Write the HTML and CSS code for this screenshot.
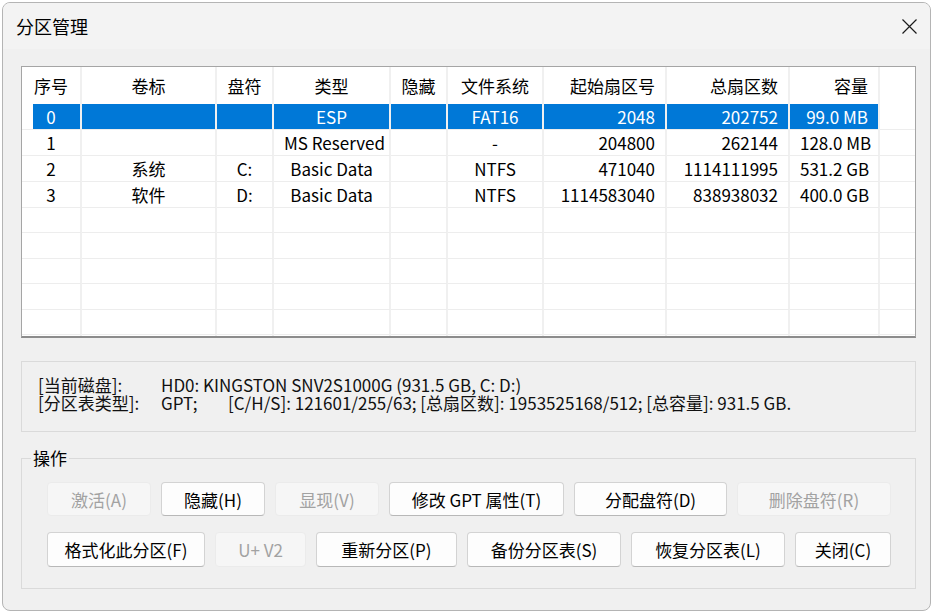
FILE: index.html
```html
<!DOCTYPE html>
<html lang="zh-CN">
<head>
    <meta charset="UTF-8">
    <title>分区管理</title>
    <link rel="stylesheet" href="styles.css">
</head>
<body>
    <div class="window">
        <div class="titlebar">
            <span class="title">分区管理</span>
            <span class="close">
                <svg width="15" height="15" viewBox="0 0 15 15"><path d="M0.5 0.5 L14.5 14.5 M14.5 0.5 L0.5 14.5" stroke="#1b1b1b" stroke-width="1.2" fill="none"/></svg>
            </span>
        </div>
        <div class="content">
            <div class="list">
                <table class="parts">
                    <colgroup>
                        <col style="width:60px"><col style="width:135px"><col style="width:57px"><col style="width:117px"><col style="width:57px">
                        <col style="width:96px"><col style="width:123px"><col style="width:123px"><col style="width:90px"><col style="width:35px">
                    </colgroup>
                    <thead>
                        <tr>
                            <th>序号</th><th>卷标</th><th>盘符</th><th>类型</th><th>隐藏</th>
                            <th>文件系统</th><th class="r">起始扇区号</th><th class="r">总扇区数</th><th class="r">容量</th><th class="fill"></th>
                        </tr>
                    </thead>
                    <tbody>
                        <tr class="sel">
                            <td>0</td><td></td><td></td><td>ESP</td><td></td>
                            <td>FAT16</td><td class="r">2048</td><td class="r">202752</td><td class="r">99.0 MB</td><td class="fill"></td>
                        </tr>
                        <tr>
                            <td>1</td><td></td><td></td><td>MS Reserved</td><td></td>
                            <td>-</td><td class="r">204800</td><td class="r">262144</td><td class="r">128.0 MB</td><td class="fill"></td>
                        </tr>
                        <tr>
                            <td>2</td><td>系统</td><td>C:</td><td>Basic Data</td><td></td>
                            <td>NTFS</td><td class="r">471040</td><td class="r">1114111995</td><td class="r">531.2 GB</td><td class="fill"></td>
                        </tr>
                        <tr>
                            <td>3</td><td>软件</td><td>D:</td><td>Basic Data</td><td></td>
                            <td>NTFS</td><td class="r">1114583040</td><td class="r">838938032</td><td class="r">400.0 GB</td><td class="fill"></td>
                        </tr>
                        <tr><td></td><td></td><td></td><td></td><td></td><td></td><td></td><td></td><td></td><td class="fill"></td></tr>
                        <tr><td></td><td></td><td></td><td></td><td></td><td></td><td></td><td></td><td></td><td class="fill"></td></tr>
                        <tr><td></td><td></td><td></td><td></td><td></td><td></td><td></td><td></td><td></td><td class="fill"></td></tr>
                        <tr><td></td><td></td><td></td><td></td><td></td><td></td><td></td><td></td><td></td><td class="fill"></td></tr>
                        <tr><td></td><td></td><td></td><td></td><td></td><td></td><td></td><td></td><td></td><td class="fill"></td></tr>
                        <tr><td></td><td></td><td></td><td></td><td></td><td></td><td></td><td></td><td></td><td class="fill"></td></tr>
                    </tbody>
                </table>
            </div>

            <div class="info">
                <div class="info-row"><span class="label">[当前磁盘]:</span><span>HD0: KINGSTON SNV2S1000G (931.5 GB, C: D:)</span></div>
                <div class="info-row"><span class="label">[分区表类型]:</span><span class="pt">GPT;</span><span>[C/H/S]: 121601/255/63; [总扇区数]: 1953525168/512; [总容量]: 931.5 GB.</span></div>
            </div>

            <fieldset class="ops">
                <legend>操作</legend>
                <div class="btn-row">
                    <button class="btn w104" disabled>激活(A)</button>
                    <button class="btn w104">隐藏(H)</button>
                    <button class="btn w104" disabled>显现(V)</button>
                    <button class="btn w175">修改 GPT 属性(T)</button>
                    <button class="btn w153">分配盘符(D)</button>
                    <button class="btn w154" disabled>删除盘符(R)</button>
                </div>
                <div class="btn-row second">
                    <button class="btn w158">格式化此分区(F)</button>
                    <button class="btn w91" disabled>U+ V2</button>
                    <button class="btn w141">重新分区(P)</button>
                    <button class="btn w154">备份分区表(S)</button>
                    <button class="btn w154">恢复分区表(L)</button>
                    <button class="btn w96">关闭(C)</button>
                </div>
            </fieldset>
        </div>
    </div>
</body>
</html>
```

FILE: styles.css
```css
body {
    margin: 0;
    background: #fff;
    font-family: "Noto Sans CJK SC", sans-serif;
    font-size: 17px;
    color: #000;
}

.window {
    box-sizing: border-box;
    width: 929px;
    height: 609px;
    margin: 2px 0 0 2px;
    border: 1px solid #b4b4b4;
    border-radius: 8px;
    background: #f0f0f0;
    overflow: hidden;
}

.titlebar {
    height: 46px;
    display: flex;
    align-items: center;
    padding: 0 13px 0 13px;
    background: #f3f3f3;
}

.title {
    font-size: 18px;
}

.close {
    margin-left: auto;
    width: 15px;
    height: 15px;
    display: flex;
}

.content {
    padding: 17px 0 0 18px;
}

/* partition list */
.list {
    box-sizing: border-box;
    width: 895px;
    height: 272px;
    border: 1px solid #a5a5a5;
    border-bottom: 2px solid #8c8c8c;
    background: #fff;
    overflow: hidden;
}

.parts {
    width: 893px;
    table-layout: fixed;
    border-collapse: separate;
    border-spacing: 0;
}

.parts th, .parts td {
    padding: 0 10px;
    text-align: center;
    white-space: nowrap;
    overflow: hidden;
    border-right: 2px solid #f0f0f0;
    font-weight: normal;
}

.parts th {
    height: 37px;
}

.parts td {
    height: 25.4px;
    border-bottom: 1px solid #ededed;
    box-sizing: border-box;
}

.parts .r {
    text-align: right;
}

.parts .fill {
    border-right: none;
}

.parts tr.sel td {
    background: #0078d7;
    color: #fff;
}

.parts tr.sel td:first-child {
    background: linear-gradient(90deg, #fff 11px, #0078d7 11px);
}

.parts tr.sel td.fill {
    background: #fff;
}

/* disk info */
.info {
    box-sizing: border-box;
    width: 895px;
    height: 71px;
    margin-top: 23px;
    padding: 14px 16px 0;
    border: 1px solid #dadada;
    color: #111;
}

.info-row {
    display: flex;
    height: 18px;
    line-height: 18px;
    white-space: nowrap;
}

.info .label {
    width: 123px;
    flex: none;
}

.info .pt {
    width: 67px;
    flex: none;
}

/* operations */
.ops {
    box-sizing: border-box;
    width: 895px;
    margin: 16px 0 0;
    padding: 14px 0 21px 25px;
    border: 1px solid #dadada;
}

.ops legend {
    margin-left: -16px;
    padding: 0 2px;
    line-height: 20px;
}

.btn-row {
    display: flex;
    gap: 10px;
    height: 34px;
}

.btn-row.second {
    margin-top: 16px;
    height: 35px;
}

.btn {
    box-sizing: border-box;
    height: 100%;
    padding: 0;
    font-family: inherit;
    font-size: 17px;
    color: #000;
    background: #fdfdfd;
    border: 1px solid #d3d3d3;
    border-bottom-color: #b8b8b8;
    border-radius: 4px;
}

.btn:disabled {
    color: #a2a2a2;
    background: #f6f6f6;
    border-color: #ebebeb;
}

.w91 { width: 91px; }
.w96 { width: 96px; }
.w104 { width: 104px; }
.w141 { width: 141px; }
.w153 { width: 153px; }
.w154 { width: 154px; }
.w158 { width: 158px; }
.w175 { width: 175px; }
```
